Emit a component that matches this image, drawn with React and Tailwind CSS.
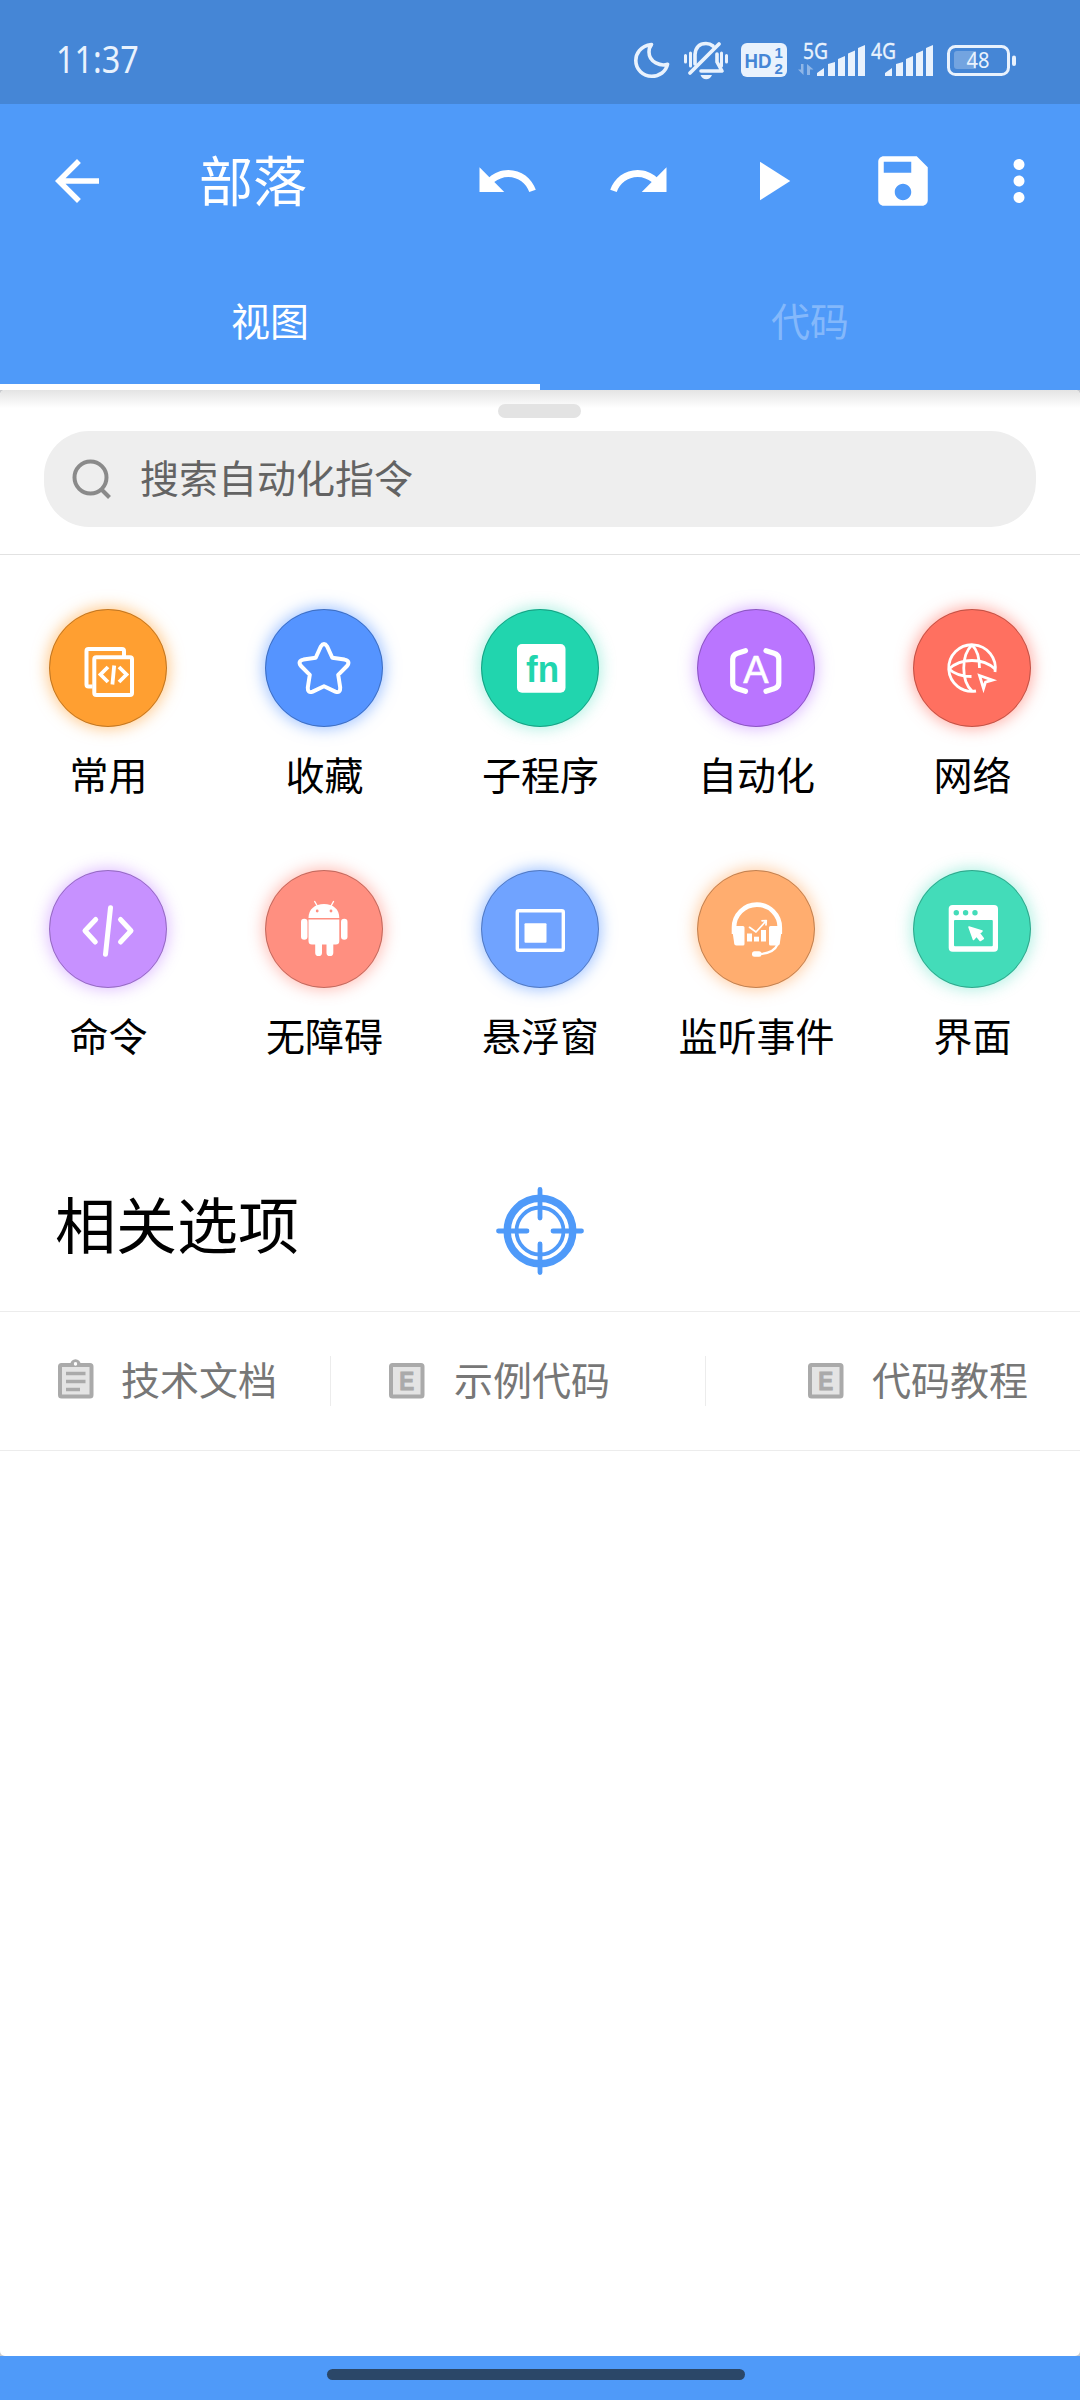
import { useState } from 'react'

const CATEGORIES = [
  { label: '常用',     circle: 'bg-[#ff9f31] shadow-[0_0_15px_2px_rgba(255,159,49,0.55)]',  Icon: CommonIcon },
  { label: '收藏',     circle: 'bg-[#5594ff] shadow-[0_0_15px_2px_rgba(85,148,255,0.55)]',  Icon: StarIcon },
  { label: '子程序',   circle: 'bg-[#21d5ae] shadow-[0_0_15px_2px_rgba(33,213,174,0.35)]',  Icon: FnIcon },
  { label: '自动化',   circle: 'bg-[#ba75ff] shadow-[0_0_15px_2px_rgba(186,117,255,0.5)]',  Icon: AutoIcon },
  { label: '网络',     circle: 'bg-[#ff7060] shadow-[0_0_15px_2px_rgba(255,112,96,0.55)]',  Icon: NetworkIcon },
  { label: '命令',     circle: 'bg-[#c791ff] shadow-[0_0_15px_2px_rgba(186,117,255,0.45)]', Icon: CommandIcon },
  { label: '无障碍',   circle: 'bg-[#ff8f80] shadow-[0_0_15px_2px_rgba(255,112,96,0.45)]',  Icon: AndroidIcon },
  { label: '悬浮窗',   circle: 'bg-[#70a3ff] shadow-[0_0_15px_2px_rgba(85,148,255,0.55)]',  Icon: FloatIcon },
  { label: '监听事件', circle: 'bg-[#ffad6f] shadow-[0_0_15px_2px_rgba(255,159,80,0.5)]',   Icon: ListenIcon },
  { label: '界面',     circle: 'bg-[#43dcb9] shadow-[0_0_15px_2px_rgba(33,213,174,0.35)]',  Icon: WindowIcon },
]

// All category icons share the 118px circle as their canvas
function Glyph({ children }) {
  return (
    <svg viewBox="0 0 118 118" className="w-[118px] h-[118px] shrink-0" fill="none" stroke="#fff" strokeLinecap="round" strokeLinejoin="round">
      {children}
    </svg>
  )
}

function CommonIcon() {
  return (
    <Glyph>
      <path d="M43.5 77.5H39.5a2 2 0 0 1-2-2V42a2 2 0 0 1 2-2H73a2 2 0 0 1 2 2v5" strokeWidth="4" strokeLinecap="butt" />
      <rect x="45.3" y="48.3" width="37.7" height="37.6" rx="2" strokeWidth="4" />
      <path d="M59 58l-7.5 7.5L59 73M70 58l7.5 7.5L70 73M65.2 56.5L63.4 75.5" strokeWidth="3.8" strokeLinecap="butt" strokeLinejoin="miter" />
    </Glyph>
  )
}

function StarIcon() {
  return (
    <Glyph>
      <path
        d="M55.8 37.5Q59 32.5 62.2 37.5L67.3 48.8L79.5 50.6Q85.8 52 82 57L73.2 65.8L75.2 78.5Q75.5 84.6 70.3 82.6L59 77.3L47.7 82.6Q42.5 84.6 42.8 78.5L44.8 65.8L36 57Q32.2 52 38.5 50.6L50.7 48.8Z"
        strokeWidth="4"
      />
    </Glyph>
  )
}

function FnIcon() {
  return (
    <Glyph>
      <rect x="36" y="35" width="48.5" height="48.7" rx="5" fill="#fff" stroke="none" />
      <text x="45" y="72.5" textLength="33" lengthAdjust="spacingAndGlyphs" fontSize="36" fontWeight="700" fontFamily="'Liberation Sans', sans-serif" fill="#21d5ae" stroke="none">fn</text>
    </Glyph>
  )
}

function AutoIcon() {
  return (
    <Glyph>
      <path d="M48.5 41.7L40.5 44.2Q35.7 45.8 35.7 50V74Q35.7 78.2 40.5 79.8L48.5 82.3M69 41.7L77 44.2Q81.8 45.8 81.8 50V74Q81.8 78.2 77 79.8L69 82.3" strokeWidth="5.2" />
      <text x="59" y="74.3" textAnchor="middle" fontSize="38" fontFamily="'Liberation Sans', sans-serif" fill="#fff" strokeWidth="0.6">A</text>
    </Glyph>
  )
}

function NetworkIcon() {
  return (
    <Glyph>
      <path d="M82 63A23.3 23.3 0 1 0 63 82" strokeWidth="2.8" strokeLinecap="butt" />
      <path d="M59 36C48 46 48 72 59 82M59 36Q66.5 43 66.5 59M36 60Q45 51.5 59 51.5T82 60M36 60Q44 67.5 58.5 67.5" strokeWidth="2.8" strokeLinecap="butt" />
      <path d="M66.5 66.5L79.5 71.2L72.5 73.2L70.5 79.5Z" strokeWidth="2.8" strokeLinejoin="miter" />
    </Glyph>
  )
}

function CommandIcon() {
  return (
    <Glyph>
      <path d="M46.7 49.5L36 60.7L46.3 72M71.5 49.5L82 60.7L71.5 72M61.5 37.7L56.5 84.3" strokeWidth="5" />
    </Glyph>
  )
}

function AndroidIcon() {
  return (
    <Glyph>
      <path d="M49.7 31.5L52.3 36M68.5 31.5L66 36" strokeWidth="1.4" />
      <g fill="#fff" stroke="none">
        <path d="M43.5 48C43.5 39 50 34 59 34S74.3 39 74.3 48Z" />
        <path d="M43.5 49.5H74.3V71a3.5 3.5 0 0 1-3.5 3.5H68.3V82.7a3.4 3.4 0 0 1-6.8 0V74.5H57V82.7a3.4 3.4 0 0 1-6.8 0V74.5H47a3.5 3.5 0 0 1-3.5-3.5Z" />
        <rect x="36" y="48.7" width="6.5" height="21" rx="3.2" />
        <rect x="76" y="48.7" width="6.5" height="21" rx="3.2" />
      </g>
      <circle cx="52.2" cy="41" r="1.4" fill="#ff8f80" stroke="none" />
      <circle cx="66" cy="41" r="1.4" fill="#ff8f80" stroke="none" />
    </Glyph>
  )
}

function FloatIcon() {
  return (
    <Glyph>
      <rect x="36.3" y="40.7" width="46" height="39.5" rx="1.5" strokeWidth="3.4" />
      <rect x="43.5" y="53.3" width="22" height="19.4" rx="1" fill="#fff" stroke="none" />
    </Glyph>
  )
}

function ListenIcon() {
  return (
    <Glyph>
      <path d="M37 64V57.5A22.9 22.9 0 0 1 82.8 57.5V64" strokeWidth="4.6" strokeLinecap="butt" />
      <g fill="#fff" stroke="none">
        <path d="M35 58a2 2 0 0 1 2-2H46a1.5 1.5 0 0 1 1.5 1.5V74a1.5 1.5 0 0 1-1.5 1.5H39.5Q37 75.5 37 72Z" />
        <path d="M85 58a2 2 0 0 0-2-2H73.5a1.5 1.5 0 0 0-1.5 1.5V74a1.5 1.5 0 0 0 1.5 1.5H80.5Q83 75.5 83 72Z" />
        <rect x="50" y="63.5" width="5" height="8" />
        <rect x="57" y="66.7" width="5" height="4.8" />
        <rect x="64" y="60" width="5" height="11.5" />
        <rect x="55" y="81.3" width="9.5" height="5.4" rx="2.5" />
      </g>
      <path d="M52.5 57.3L59 62L68.5 51.5M65 50.8L69.3 50.5L69 55" strokeWidth="1.7" />
      <path d="M80.5 74.5Q77 83 63 84" strokeWidth="2.2" />
    </Glyph>
  )
}

function WindowIcon() {
  return (
    <Glyph>
      <rect x="35.7" y="35" width="49.3" height="46.7" rx="4" fill="#fff" stroke="none" />
      <g fill="#43dcb9" stroke="none">
        <circle cx="43.3" cy="42.7" r="2.7" />
        <circle cx="52.6" cy="42.7" r="2.7" />
        <circle cx="62" cy="42.7" r="2.7" />
        <rect x="41" y="50" width="38.8" height="26.3" rx="1" />
      </g>
      <path d="M56 57L69 61L66.5 63.5L70.3 68.5L67.2 70.5L63.5 66L60.5 69.5Z" fill="#fff" strokeWidth="1.6" />
    </Glyph>
  )
}

/* ---------- status bar ---------- */

function Signal({ label, data }) {
  return (
    <svg width="68" height="56" viewBox="0 -10 68 56" fill="#e9f2fd">
      <text x="5" y="16.5" textLength="25" lengthAdjust="spacingAndGlyphs" fontSize="22" fontFamily="'Noto Sans', sans-serif" stroke="#e9f2fd" strokeWidth="0.3">{label}</text>
      {data && (
        <path d="M5.5 22V33L0 27.5H3V22ZM9 33V22L15.5 27.5H12V33Z" opacity="0.45" />
      )}
      <path d="M19 34V31L26 26V34ZM30 34V22L37 20V34ZM40 34V17L47 14V34ZM50 34V11.5L57 8.5V34ZM60 34V6L67 3V34Z" />
    </svg>
  )
}

function StatusBar() {
  return (
    <div className="h-[104px] bg-[#4586d6] text-[#e9f2fd] flex items-center justify-between pl-[56px] pr-[63px] pt-[15px]">
      <span className="font-['Noto_Sans'] text-[39px] leading-none origin-left scale-x-[0.83] inline-block mb-[5px]">11:37</span>
      <div className="flex items-center">
        <svg width="36" height="38" viewBox="0 0 36 38" fill="none" stroke="#e9f2fd" strokeWidth="3.6" strokeLinejoin="round" className="mr-[14px]">
          <path d="M17.5 3.5C6 5 1.8 13 1.8 19.5C1.8 28.5 9 35.3 17.7 35.3C25.500 35.3 32 30.5 33.6 23.2C27 25.5 15 21.5 15 11Q15 6.500 17.5 3.5Z" />
        </svg>
        <svg width="44" height="40" viewBox="0 0 44 40" fill="none" stroke="#e9f2fd" strokeWidth="3" strokeLinecap="round" strokeLinejoin="round" className="mr-[13px]">
          <path d="M1.5 15.5V22M6.5 13V26M42.5 15.5V22M37.5 13V26" />
          <path d="M11 24V14.5Q12 3.5 22 3.5Q26 3.5 29 6M33 14V22L38 31H17" strokeWidth="3.6" />
          <path d="M35 4L6 33" strokeWidth="3.8" />
          <path d="M16.5 35H28Q26 39.3 22.2 39.3T16.5 35Z" fill="#e9f2fd" stroke="none" />
        </svg>
        <svg width="46" height="34" viewBox="0 0 46 34" className="mr-[11px]">
          <rect width="46" height="34" rx="6" fill="#e9f2fd" />
          <g fill="#4586d6" fontFamily="'Liberation Sans', sans-serif" fontWeight="700">
            <text x="3.5" y="24.5" fontSize="20" textLength="27" lengthAdjust="spacingAndGlyphs">HD</text>
            <text x="33.5" y="15" fontSize="15">1</text>
            <text x="33.5" y="30.5" fontSize="15">2</text>
          </g>
        </svg>
        <div className="flex items-center">
          <Signal label="5G" data />
          <Signal label="4G" />
        </div>
        <svg width="70" height="32" viewBox="0 0 70 32" fill="none" className="ml-[13px] mt-[2px]">
          <rect x="1.5" y="1.5" width="60" height="28" rx="7" stroke="#e9f2fd" strokeWidth="3" />
          <path d="M10 6H29V24H10a3 3 0 0 1-3-3V9a3 3 0 0 1 3-3Z" fill="#fff" opacity="0.25" />
          <rect x="65" y="10.5" width="4" height="10.5" rx="2" fill="#e9f2fd" />
          <text x="31" y="23" textAnchor="middle" fontSize="22" textLength="23" lengthAdjust="spacingAndGlyphs" fontFamily="'Noto Sans', sans-serif" fill="#e9f2fd">48</text>
        </svg>
      </div>
    </div>
  )
}

/* ---------- toolbar ---------- */

const TOOLBAR_ACTIONS = [
  { name: 'undo', d: 'M12.5 8c-2.65 0-5.05.99-6.9 2.6L2 7v9h9l-3.62-3.62c1.39-1.16 3.16-1.88 5.12-1.88 3.54 0 6.55 2.31 7.6 5.5l2.37-.78C21.08 11.03 17.15 8 12.5 8z' },
  { name: 'redo', d: 'M18.4 10.6C16.55 8.99 14.15 8 11.5 8c-4.65 0-8.58 3.03-9.96 7.22L3.9 16c1.05-3.19 4.05-5.5 7.6-5.5 1.95 0 3.73.72 5.12 1.88L13 16h9V7l-3.6 3.6z' },
  { name: 'run', d: 'M8 5v14l11-7z' },
  { name: 'save', d: 'M17 3H5c-1.11 0-2 .9-2 2v14c0 1.1.89 2 2 2h14c1.1 0 2-.9 2-2V7l-4-4zm-5 16c-1.66 0-3-1.34-3-3s1.34-3 3-3 3 1.34 3 3-1.34 3-3 3zm3-10H5V5h10v4z' },
]

function MdIcon({ d }) {
  return (
    <svg viewBox="0 0 24 24" className="w-[66px] h-[66px]" fill="currentColor">
      <path d={d} />
    </svg>
  )
}

function Toolbar() {
  return (
    <div className="h-[154px] flex items-center pl-[44px] pr-[28px]">
      <button><MdIcon d="M20 11H7.83l5.59-5.59L12 4l-8 8 8 8 1.41-1.41L7.83 13H20v-2z" /></button>
      <h1 className="text-[54px] leading-none ml-[89px] pb-[5px] flex-1">部落</h1>
      <div className="flex items-center">
        {TOOLBAR_ACTIONS.map(a => (
          <button key={a.name} className="w-[132px] flex justify-center"><MdIcon d={a.d} /></button>
        ))}
      </div>
      <button className="ml-[17px]">
        <MdIcon d="M12 8c1.1 0 2-.9 2-2s-.9-2-2-2-2 .9-2 2 .9 2 2 2zm0 2c-1.1 0-2 .9-2 2s.9 2 2 2 2-.9 2-2-.9-2-2-2zm0 6c-1.1 0-2 .9-2 2s.9 2 2 2 2-.9 2-2-.9-2-2-2z" />
      </button>
    </div>
  )
}

/* ---------- related links ---------- */

function DocIcon() {
  return (
    <svg width="36" height="40" viewBox="0 0 36 40" fill="none">
      <circle cx="17.5" cy="5.5" r="3.7" stroke="#aaa" strokeWidth="3" />
      <rect x="2" y="6" width="31.5" height="31.5" rx="1.5" fill="#e4e4e4" stroke="#aaa" strokeWidth="4" />
      <circle cx="17.5" cy="5" r="1.7" fill="#fff" />
      <path d="M8 14.5H27.5M8 22.5H27.5M8 30.5H22" stroke="#aaa" strokeWidth="3.5" />
    </svg>
  )
}

function ExampleIcon() {
  return (
    <svg width="36" height="36" viewBox="0 0 36 36" fill="none">
      <rect x="2" y="2" width="31.5" height="31.5" rx="1.5" fill="#e4e4e4" stroke="#aaa" strokeWidth="4" />
      <text x="17.7" y="26.5" textAnchor="middle" fontSize="25" fontWeight="700" textLength="15" lengthAdjust="spacingAndGlyphs" fontFamily="'Liberation Sans', sans-serif" fill="#aaa" stroke="#aaa" strokeWidth="0.9">E</text>
    </svg>
  )
}

function TargetIcon() {
  return (
    <svg width="88" height="88" viewBox="-44 -44 88 88" fill="none" stroke="#4f9af9">
      <circle r="32.8" strokeWidth="7.4" />
      <circle r="23.5" strokeWidth="3.8" />
      <path d="M0-41.5V-13M0 41.5V13M-41.5 0H-13M41.5 0H13" strokeWidth="4.8" strokeLinecap="round" />
    </svg>
  )
}

export default function App() {
  const [tab, setTab] = useState('view')

  return (
    <div className="w-[1080px] h-[2400px] flex flex-col bg-white overflow-hidden font-['Noto_Sans_CJK_SC',sans-serif]">
      <StatusBar />

      <header className="bg-[#4f9af9] text-white">
        <Toolbar />
        <div className="grid grid-cols-2 h-[132px] text-[39px] leading-none">
          <button onClick={() => setTab('view')} className={tab === 'view' ? 'border-b-[6px] border-white pb-[4px]' : 'border-b-[6px] border-transparent pb-[4px] text-[#84b8fb]'}>视图</button>
          <button onClick={() => setTab('code')} className={tab === 'code' ? 'border-b-[6px] border-white pb-[4px]' : 'border-b-[6px] border-transparent pb-[4px] text-[#84b8fb]'}>代码</button>
        </div>
      </header>

      <main className="flex-1 bg-[#c9cbcf]">
        <div className="h-full bg-white rounded-[5px] overflow-hidden">
          {/* Drag handle + search */}
          <div className="h-[165px] border-b border-[#e2e2e2] bg-linear-to-b from-[#e4e4e4] via-white via-[11%] to-white flex flex-col items-center">
            <div className="w-[83px] h-[14px] rounded-[7px] bg-[#e3e3e3] mt-[14px] mr-[2px]" />
            <div className="w-[992px] h-[96px] rounded-[45px] bg-[#eeeeee] mt-[13px] flex items-center pl-[28px]">
              <svg width="40" height="40" viewBox="0 0 40 40" fill="none" stroke="#8a8a8a" strokeWidth="4">
                <circle cx="18.5" cy="18.5" r="16" />
                <path d="M29.5 30.5L37.5 38.5" />
              </svg>
              <span className="text-[39px] leading-none text-[#636363] ml-[28px] pb-[5px]">搜索自动化指令</span>
            </div>
          </div>

          {/* Command categories */}
          <div className="grid grid-cols-5 pt-[54px] gap-y-[76px]">
            {CATEGORIES.map(({ label, circle, Icon }) => (
              <div key={label} className="h-[185px] flex flex-col items-center">
                <div className={`w-[118px] h-[118px] rounded-full flex items-center justify-center outline outline-1 -outline-offset-1 outline-black/25 ${circle}`}>
                  <Icon />
                </div>
                <span className="text-[39px] leading-[40px] text-black mt-[26px] pl-[1px] whitespace-nowrap">{label}</span>
              </div>
            ))}
          </div>

          {/* Related options */}
          <div className="h-[157px] mt-[100px] border-b border-[#ececec] grid grid-cols-[1fr_88px_1fr] items-center">
            <h2 className="text-[61px] leading-none text-black pl-[55px] pb-[22px]">相关选项</h2>
            <div className="pb-[4px]"><TargetIcon /></div>
          </div>
          <div className="h-[139px] border-b border-[#ececec] flex items-center text-[39px] leading-none text-[#777]">
            <div className="w-[331px] h-[50px] border-r border-[#ececec] flex items-center pl-[58px]">
              <span className="mb-[4px]"><DocIcon /></span>
              <span className="ml-[27px] pb-[6px]">技术文档</span>
            </div>
            <div className="w-[375px] h-[50px] border-r border-[#ececec] flex items-center pl-[58px]">
              <ExampleIcon />
              <span className="ml-[29px] pb-[6px]">示例代码</span>
            </div>
            <div className="flex-1 flex items-center justify-end pr-[52px]">
              <ExampleIcon />
              <span className="ml-[28px] pb-[6px]">代码教程</span>
            </div>
          </div>
        </div>
      </main>

      {/* Gesture bar */}
      <div className="h-[44px] bg-[#4f9af9] flex justify-center">
        <div className="w-[418px] h-[11px] rounded-full bg-[#2b4768] mt-[13px] -ml-[8px]" />
      </div>
    </div>
  )
}
